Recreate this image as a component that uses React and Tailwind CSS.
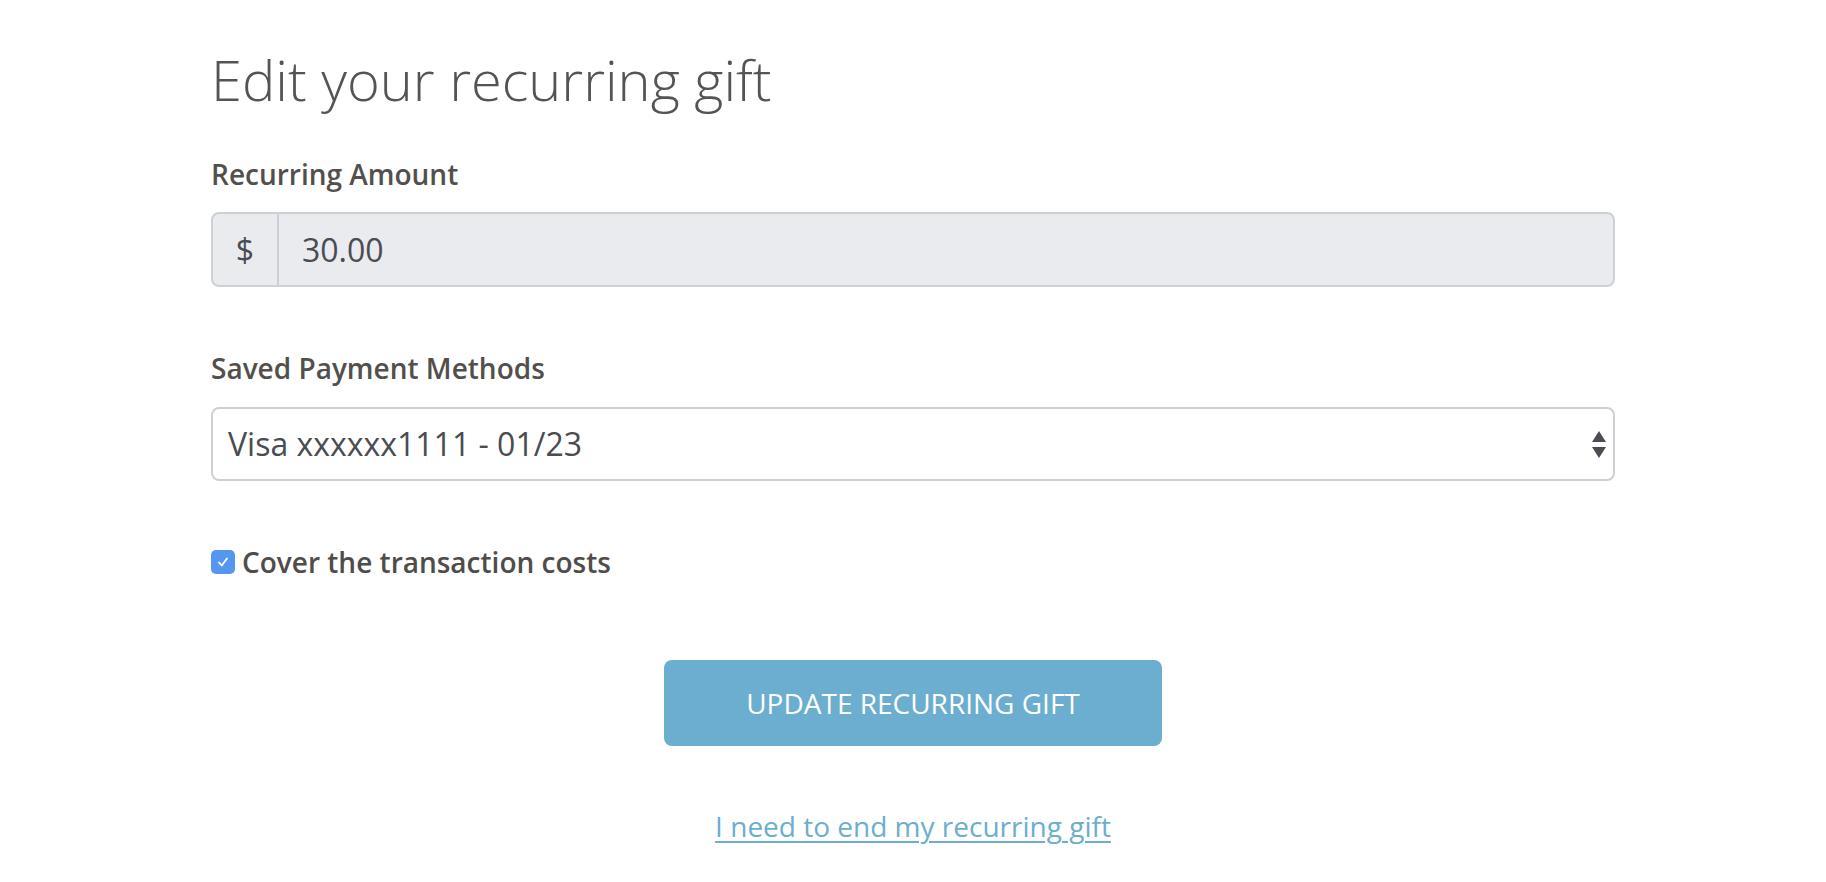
import React from "react";

export default function App() {
  return (
    <div className="min-h-screen w-full bg-white" style={{ fontFamily: '"Open Sans", "Liberation Sans", sans-serif' }}>
      <div className="mx-auto w-[1404px] pt-[48px]">
        <h1 className="text-[56px] leading-[62px] font-light text-[#545454]">Edit your recurring gift</h1>

        <div className="mt-[45px] text-[28px] leading-[39px] font-semibold text-[#524f4d]">Recurring Amount</div>
        <div className="mt-[18px] flex h-[75px] rounded-[8px] border-2 border-[#cdd1d6] bg-[#e9ebee] text-[#494c51]">
          <div className="flex w-[66px] items-center justify-center border-r-2 border-[#cdd1d6] text-[32px]">$</div>
          <div className="flex items-center pl-[23px] text-[32px]">30.00</div>
        </div>

        <div className="mt-[62px] text-[28px] leading-[39px] font-semibold text-[#524f4d]">Saved Payment Methods</div>
        <div className="mt-[19px] flex h-[74px] items-center justify-between rounded-[8px] border-2 border-[#cdd1d6] bg-white pl-[15px] pr-[7px] text-[#494c51]">
          <span className="text-[32px]">Visa xxxxxx1111 - 01/23</span>
          <svg width="14" height="28" viewBox="0 0 14 28" className="mt-[2px]">
            <polygon points="7,0 14,11 0,11" fill="#4a4d52" />
            <polygon points="0,16 14,16 7,27" fill="#4a4d52" />
          </svg>
        </div>

        <div className="mt-[61px] flex h-[40px] items-center">
          <div className="flex h-[24px] w-[24px] items-center justify-center rounded-[5px] bg-[#5597f0]">
            <svg width="16" height="16" viewBox="0 0 16 16">
              <path d="M4 8.5 L6.8 11.5 L12 4.5" fill="none" stroke="white" strokeWidth="1.8" strokeLinecap="round" strokeLinejoin="round" />
            </svg>
          </div>
          <span className="ml-[7px] text-[28px] leading-[40px] font-semibold text-[#4f4c4a]">Cover the transaction costs</span>
        </div>

        <div className="mt-[78px] flex justify-center">
          <button className="flex h-[86px] w-[498px] items-center justify-center rounded-[8px] bg-[#6caed0] text-[28px] text-white">
            UPDATE RECURRING GIFT
          </button>
        </div>

        <div className="mt-[60px] flex justify-center">
          <a href="#" className="text-[28px] leading-[40px] text-[#6caed0] underline underline-offset-[4px] decoration-2">
            I need to end my recurring gift
          </a>
        </div>
      </div>
    </div>
  );
}
